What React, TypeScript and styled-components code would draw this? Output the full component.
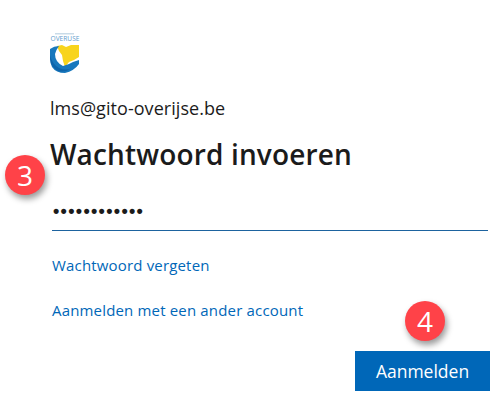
import React from 'react';
import styled, { createGlobalStyle } from 'styled-components';

const GlobalStyle = createGlobalStyle`
    html, body {
        margin: 0;
        padding: 0;
        background: #ffffff;
    }
`;

const Page = styled.div`
    position: relative;
    width: 499px;
    height: 403px;
    overflow: hidden;
    box-sizing: border-box;
    padding: 33px 9px 0 50px;
    display: flex;
    flex-direction: column;
    font-family: 'Open Sans', 'Noto Sans', sans-serif;
    color: #1b1b1b;
`;

const Logo = styled.svg`
    display: block;
    width: 30px;
    height: 41px;
`;

const Email = styled.div`
    margin-top: 22px;
    font-size: 18px;
    line-height: 24px;
    letter-spacing: 0.05px;
`;

const Title = styled.h1`
    margin: 16px 0 0;
    font-size: 28px;
    line-height: 36px;
    font-weight: 600;
    letter-spacing: 0.15px;
`;

const PasswordInput = styled.div`
    margin: 20px 2px 0 2px;
    height: 39px;
    box-sizing: border-box;
    border-bottom: 1px solid #1d639f;
    font-family: 'Liberation Sans', sans-serif;
    font-size: 18px;
    line-height: 38px;
    letter-spacing: 1.3px;
    padding-left: 1px;
    font-weight: 700;
`;

const LinkText = styled.a<{ $top: number }>`
    display: block;
    margin: ${({ $top }) => $top}px 0 0 2px;
    font-size: 15px;
    line-height: 20px;
    color: #0067b8;
    letter-spacing: 0.17px;
`;

const Footer = styled.div`
    display: flex;
    justify-content: flex-end;
    margin-top: 31px;
`;

const SubmitButton = styled.button`
    width: 135px;
    height: 40px;
    border: 0;
    padding: 0;
    background: #0067b8;
    color: #ffffff;
    font-family: inherit;
    font-size: 17.5px;
`;

const Badge = styled.div<{ $x: number; $y: number }>`
    position: absolute;
    left: ${({ $x }) => $x}px;
    top: ${({ $y }) => $y}px;
    width: 40px;
    height: 40px;
    border-radius: 50%;
    background: #ff4248;
    color: #ffffff;
    font-family: 'Open Sans', sans-serif;
    font-size: 28px;
    display: flex;
    align-items: center;
    justify-content: center;
    box-shadow: 2px 4px 6px rgba(0, 0, 0, 0.4);
`;

const OveruseLogo = () => (
    <Logo viewBox="0 0 30 41">
        <rect x="5" y="0" width="19" height="1.5" fill="#c9dbe8" />
        <text x="15" y="8" textAnchor="middle" fontFamily="Open Sans, sans-serif" fontSize="6.6" fill="#5f9bcc">OVERUSE</text>
        <path d="M7 13 L12 12 L16 14 L21 12 L29 12 V24 L24 27 L19 29 L15 34 L13 28 L12 22 L9 18 Z" fill="#f8d41c" />
        <path d="M0 16 Q4 13 9 13 Q6 17 5 21 Q5 29 13 33 L19 31 L23 29 L29 27 V31 Q24 38 15 40 Q6 40 2 34 Q0 30 0 24 Z" fill="#1878bd" />
        <path d="M0 22 Q2 31 9 35 Q16 38 22 35 Q15 40 8 38 Q1 34 0 26 Z" fill="#0e64aa" />
    </Logo>
);

export default function App() {
    return (
        <Page>
            <GlobalStyle />
            <OveruseLogo />
            <Email>lms@gito-overijse.be</Email>
            <Title>Wachtwoord invoeren</Title>
            <PasswordInput>••••••••••••</PasswordInput>
            <LinkText $top={24}>Wachtwoord vergeten</LinkText>
            <LinkText $top={25}>Aanmelden met een ander account</LinkText>
            <Footer>
                <SubmitButton>Aanmelden</SubmitButton>
            </Footer>
            <Badge $x={5} $y={155}>3</Badge>
            <Badge $x={405} $y={301}>4</Badge>
        </Page>
    );
}
